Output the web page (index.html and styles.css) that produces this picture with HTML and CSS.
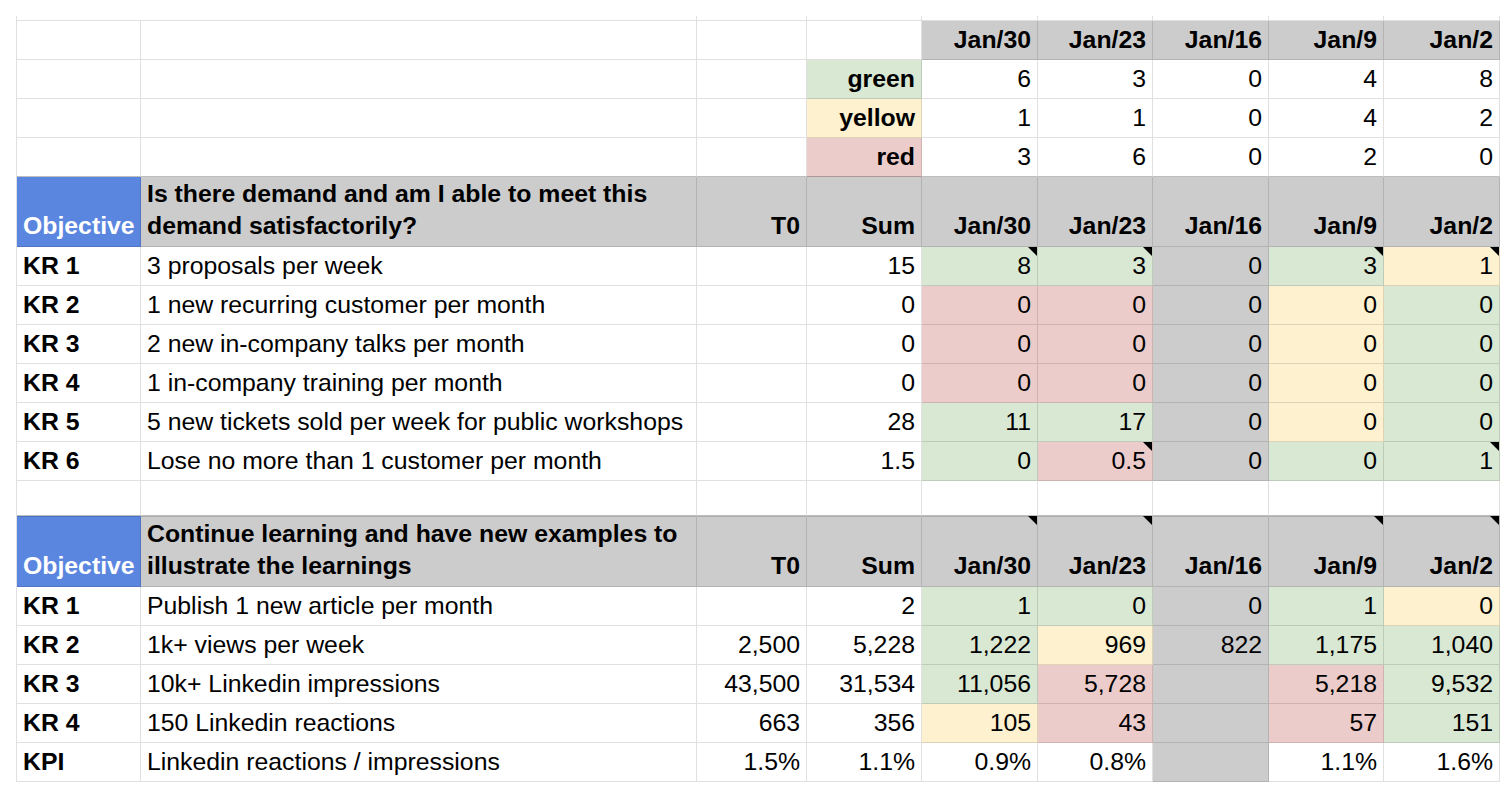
FILE: index.html
```html
<!DOCTYPE html>
<html>
<head>
<meta charset="utf-8">
<link rel="stylesheet" href="styles.css">
</head>
<body>
<div class="sheet">
  <div class="row stub">
    <div class="c span2"></div><div class="c"></div><div class="c"></div><div class="c"></div><div class="c"></div><div class="c"></div><div class="c"></div><div class="c"></div>
  </div>

  <div class="row">
    <div class="c"></div><div class="c"></div><div class="c"></div><div class="c"></div>
    <div class="c r b gr">Jan/30</div><div class="c r b gr">Jan/23</div><div class="c r b gr">Jan/16</div><div class="c r b gr">Jan/9</div><div class="c r b gr">Jan/2</div>
  </div>
  <div class="row">
    <div class="c"></div><div class="c"></div><div class="c"></div>
    <div class="c r b g">green</div>
    <div class="c r">6</div><div class="c r">3</div><div class="c r">0</div><div class="c r">4</div><div class="c r">8</div>
  </div>
  <div class="row">
    <div class="c"></div><div class="c"></div><div class="c"></div>
    <div class="c r b y">yellow</div>
    <div class="c r">1</div><div class="c r">1</div><div class="c r">0</div><div class="c r">4</div><div class="c r">2</div>
  </div>
  <div class="row above">
    <div class="c"></div><div class="c"></div><div class="c"></div>
    <div class="c r b rd">red</div>
    <div class="c r">3</div><div class="c r">6</div><div class="c r">0</div><div class="c r">2</div><div class="c r">0</div>
  </div>

  <div class="row head">
    <div class="c b bl">Objective</div>
    <div class="c b gr wrap">Is there demand and am I able to meet this<br>demand satisfactorily?</div>
    <div class="c r b gr">T0</div><div class="c r b gr">Sum</div>
    <div class="c r b gr">Jan/30</div><div class="c r b gr">Jan/23</div><div class="c r b gr">Jan/16</div><div class="c r b gr">Jan/9</div><div class="c r b gr">Jan/2</div>
  </div>
  <div class="row">
    <div class="c b">KR 1</div><div class="c">3 proposals per week</div><div class="c r"></div><div class="c r">15</div>
    <div class="c r g t">8</div><div class="c r g t">3</div><div class="c r gr">0</div><div class="c r g t">3</div><div class="c r y t">1</div>
  </div>
  <div class="row">
    <div class="c b">KR 2</div><div class="c">1 new recurring customer per month</div><div class="c r"></div><div class="c r">0</div>
    <div class="c r rd">0</div><div class="c r rd">0</div><div class="c r gr">0</div><div class="c r y">0</div><div class="c r g">0</div>
  </div>
  <div class="row">
    <div class="c b">KR 3</div><div class="c">2 new in-company talks per month</div><div class="c r"></div><div class="c r">0</div>
    <div class="c r rd">0</div><div class="c r rd">0</div><div class="c r gr">0</div><div class="c r y">0</div><div class="c r g">0</div>
  </div>
  <div class="row">
    <div class="c b">KR 4</div><div class="c">1 in-company training per month</div><div class="c r"></div><div class="c r">0</div>
    <div class="c r rd">0</div><div class="c r rd">0</div><div class="c r gr">0</div><div class="c r y">0</div><div class="c r g">0</div>
  </div>
  <div class="row">
    <div class="c b">KR 5</div><div class="c">5 new tickets sold per week for public workshops</div><div class="c r"></div><div class="c r">28</div>
    <div class="c r g">11</div><div class="c r g">17</div><div class="c r gr">0</div><div class="c r y">0</div><div class="c r g">0</div>
  </div>
  <div class="row">
    <div class="c b">KR 6</div><div class="c">Lose no more than 1 customer per month</div><div class="c r"></div><div class="c r">1.5</div>
    <div class="c r g">0</div><div class="c r rd t">0.5</div><div class="c r gr">0</div><div class="c r g">0</div><div class="c r g t">1</div>
  </div>

  <div class="row blank above">
    <div class="c"></div><div class="c"></div><div class="c"></div><div class="c"></div><div class="c"></div><div class="c"></div><div class="c"></div><div class="c"></div><div class="c"></div>
  </div>

  <div class="row head head2">
    <div class="c b bl">Objective</div>
    <div class="c b gr wrap">Continue learning and have new examples to<br>illustrate the learnings</div>
    <div class="c r b gr">T0</div><div class="c r b gr">Sum</div>
    <div class="c r b gr t">Jan/30</div><div class="c r b gr t">Jan/23</div><div class="c r b gr">Jan/16</div><div class="c r b gr t">Jan/9</div><div class="c r b gr t">Jan/2</div>
  </div>
  <div class="row">
    <div class="c b">KR 1</div><div class="c">Publish 1 new article per month</div><div class="c r"></div><div class="c r">2</div>
    <div class="c r g">1</div><div class="c r g">0</div><div class="c r gr">0</div><div class="c r g">1</div><div class="c r y">0</div>
  </div>
  <div class="row">
    <div class="c b">KR 2</div><div class="c">1k+ views per week</div><div class="c r">2,500</div><div class="c r">5,228</div>
    <div class="c r g">1,222</div><div class="c r y">969</div><div class="c r gr">822</div><div class="c r g">1,175</div><div class="c r g">1,040</div>
  </div>
  <div class="row">
    <div class="c b">KR 3</div><div class="c">10k+ Linkedin impressions</div><div class="c r">43,500</div><div class="c r">31,534</div>
    <div class="c r g">11,056</div><div class="c r rd">5,728</div><div class="c r gr"></div><div class="c r rd">5,218</div><div class="c r g">9,532</div>
  </div>
  <div class="row">
    <div class="c b">KR 4</div><div class="c">150 Linkedin reactions</div><div class="c r">663</div><div class="c r">356</div>
    <div class="c r y">105</div><div class="c r rd">43</div><div class="c r gr"></div><div class="c r rd">57</div><div class="c r g">151</div>
  </div>
  <div class="row">
    <div class="c b">KPI</div><div class="c">Linkedin reactions / impressions</div><div class="c r">1.5%</div><div class="c r">1.1%</div>
    <div class="c r">0.9%</div><div class="c r">0.8%</div><div class="c r gr"></div><div class="c r">1.1%</div><div class="c r">1.6%</div>
  </div>
</div>
</body>
</html>
```

FILE: styles.css
```css
html, body {
  margin: 0;
  padding: 0;
  background: #ffffff;
}

body {
  font-family: "Liberation Sans", Arial, Helvetica, sans-serif;
  font-size: 24.8px;
  color: #000000;
}

.sheet {
  margin: 16px 0 0 16px;
  width: 1484px;
  border-left: 1px solid rgba(0, 0, 0, 0.12);
}

.row {
  display: grid;
  grid-template-columns: 124px 556px 110px 115px 116px 115px 116px 115px 116px;
  height: 39px;
}

.row.stub {
  height: 5px;
}

.row.head {
  height: 70px;
}

.row.head2 {
  height: 71px;
}

.row.blank {
  height: 35px;
}

.c {
  position: relative;
  display: flex;
  align-items: flex-end;
  padding: 0 6px 4px 6px;
  line-height: 31.5px;
  white-space: nowrap;
  overflow: hidden;
  border-right: 1px solid rgba(0, 0, 0, 0.12);
  border-bottom: 1px solid rgba(0, 0, 0, 0.12);
}

.span2 {
  grid-column: span 2;
}

.head .c {
  padding-bottom: 5px;
}

.above .c {
  border-bottom-color: rgba(0, 0, 0, 0.25);
}

.head2 .c {
  box-shadow: inset 0 1px 0 rgba(0, 0, 0, 0.15);
}

.wrap {
  white-space: normal;
}

.r {
  justify-content: flex-end;
}

.b {
  font-weight: bold;
}

.g {
  background: #d9e8d3;
}

.y {
  background: #fdf1cf;
}

.rd {
  background: #ebcccb;
}

.gr {
  background: #cccccc;
}

.bl {
  background: #5a86e0;
  color: #ffffff;
}

.t::after {
  content: "";
  position: absolute;
  top: 0;
  right: 0;
  width: 0;
  height: 0;
  border-top: 9px solid #000000;
  border-left: 9px solid transparent;
}
```
